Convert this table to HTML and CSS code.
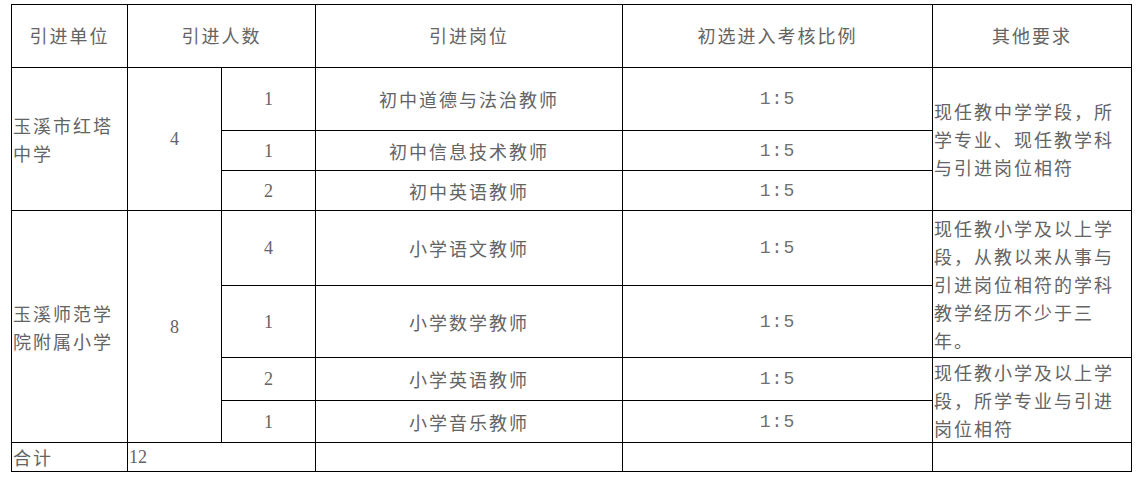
FILE: index.html
```html
<!DOCTYPE html>
<html lang="zh-CN">
<head>
<meta charset="utf-8">
<title>引进计划</title>
<link rel="stylesheet" href="styles.css">
</head>
<body>
<table class="plan">
  <colgroup>
    <col class="c-unit">
    <col class="c-total">
    <col class="c-num">
    <col class="c-post">
    <col class="c-ratio">
    <col class="c-req">
  </colgroup>
  <tr class="r-head">
    <th>引进单位</th>
    <th colspan="2">引进人数</th>
    <th>引进岗位</th>
    <th>初选进入考核比例</th>
    <th>其他要求</th>
  </tr>
  <tr class="r-63">
    <td rowspan="3" class="unit">玉溪市红塔中学</td>
    <td rowspan="3" class="num">4</td>
    <td class="num">1</td>
    <td>初中道德与法治教师</td>
    <td class="ratio">1:5</td>
    <td rowspan="3" class="req">现任教中学学段，所学专业、现任教学科与引进岗位相符</td>
  </tr>
  <tr class="r-40">
    <td class="num">1</td>
    <td>初中信息技术教师</td>
    <td class="ratio">1:5</td>
  </tr>
  <tr class="r-40">
    <td class="num">2</td>
    <td>初中英语教师</td>
    <td class="ratio">1:5</td>
  </tr>
  <tr class="r-75">
    <td rowspan="4" class="unit">玉溪师范学院附属小学</td>
    <td rowspan="4" class="num">8</td>
    <td class="num">4</td>
    <td>小学语文教师</td>
    <td class="ratio">1:5</td>
    <td rowspan="2" class="req">现任教小学及以上学段，从教以来从事与引进岗位相符的学科教学经历不少于三年。</td>
  </tr>
  <tr class="r-72">
    <td class="num">1</td>
    <td>小学数学教师</td>
    <td class="ratio">1:5</td>
  </tr>
  <tr class="r-43">
    <td class="num">2</td>
    <td>小学英语教师</td>
    <td class="ratio">1:5</td>
    <td rowspan="2" class="req">现任教小学及以上学段，所学专业与引进岗位相符</td>
  </tr>
  <tr class="r-42">
    <td class="num">1</td>
    <td>小学音乐教师</td>
    <td class="ratio">1:5</td>
  </tr>
  <tr class="r-29">
    <td class="unit">合计</td>
    <td colspan="2" class="num left">12</td>
    <td></td>
    <td></td>
    <td></td>
  </tr>
</table>
</body>
</html>
```
FILE: styles.css
```css
html, body {
  margin: 0;
  padding: 0;
  background: #ffffff;
}

.plan {
  margin: 4px 0 0 11px;
  width: 1121px;
  border-collapse: collapse;
  table-layout: fixed;
  font-family: "Noto Sans CJK SC", "Liberation Serif", serif;
  font-size: 18px;
  letter-spacing: 2px;
  color: #646464;
}

.c-unit { width: 116px; }
.c-total { width: 94px; }
.c-num { width: 94px; }
.c-post { width: 307px; }
.c-ratio { width: 310px; }
.c-req { width: 199px; }

.plan th,
.plan td {
  border: 1px solid #000000;
  padding: 0;
  text-align: center;
  vertical-align: middle;
  font-weight: 400;
  line-height: 28px;
}

.plan th {
  padding-bottom: 3px;
}

.r-head { height: 63px; }
.r-63 { height: 63px; }
.r-40 { height: 40px; }
.r-75 { height: 75px; }
.r-72 { height: 72px; }
.r-43 { height: 43px; }
.r-42 { height: 42px; }
.r-29 { height: 29px; }

.plan td.unit {
  text-align: left;
  padding-left: 1px;
}

.plan td.num {
  font-family: "Liberation Serif", serif;
  font-size: 18px;
  letter-spacing: 0;
}

.plan td.num.left {
  text-align: left;
  padding-left: 1px;
}

.plan td.ratio {
  font-family: "Liberation Mono", monospace;
  font-size: 18px;
  letter-spacing: 1px;
  color: #707070;
}

.plan td.req {
  text-align: left;
  padding-left: 1px;
  line-height: 28px;
}
```
